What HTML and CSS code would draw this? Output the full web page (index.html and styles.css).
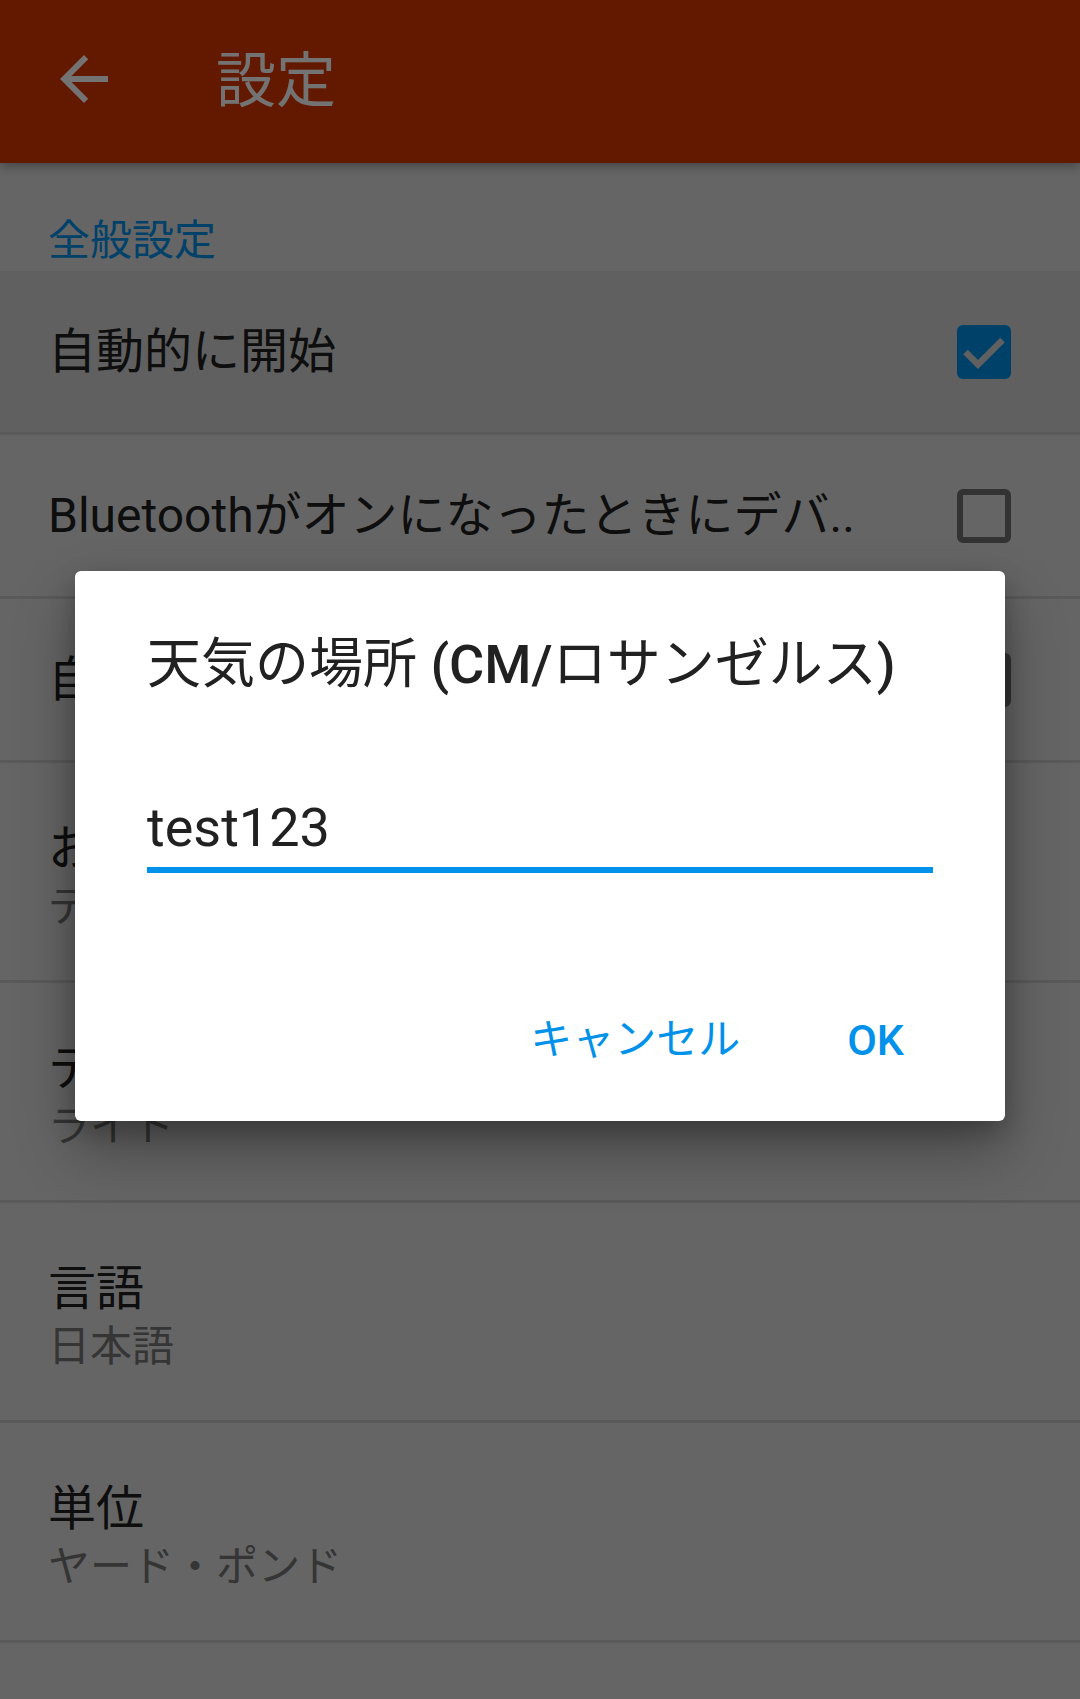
FILE: index.html
```html
<!DOCTYPE html>
<html lang="ja">
<head>
<meta charset="utf-8">
<title>設定</title>
<link rel="stylesheet" href="styles.css">
</head>
<body>
<div class="screen">
  <header class="toolbar">
    <span class="nav">
      <svg viewBox="0 0 24 24" width="72" height="72"><path d="M20 11H7.83l5.59-5.59L12 4l-8 8 8 8 1.41-1.41L7.83 13H20v-2z"/></svg>
    </span>
    <h1 class="toolbar-title">設定</h1>
  </header>

  <main class="prefs">
    <div class="category">全般設定</div>

    <div class="pref pref-pressed">
      <div class="pref-text"><div class="pref-title">自動的に開始</div></div>
      <span class="checkbox checked">
        <svg viewBox="0 0 54 54" width="54" height="54"><polyline points="8.5,27 21,39.5 45.5,15" /></svg>
      </span>
    </div>

    <div class="pref">
      <div class="pref-text"><div class="pref-title">Bluetoothがオンになったときにデバ..</div></div>
      <span class="checkbox"></span>
    </div>

    <div class="pref">
      <div class="pref-text"><div class="pref-title">自動接続</div></div>
      <span class="checkbox"></span>
    </div>

    <div class="pref pref-two">
      <div class="pref-text">
        <div class="pref-title">お気に入り</div>
        <div class="pref-summary">デバイス</div>
      </div>
    </div>

    <div class="pref pref-two">
      <div class="pref-text">
        <div class="pref-title">テーマ</div>
        <div class="pref-summary">ライト</div>
      </div>
    </div>

    <div class="pref pref-two">
      <div class="pref-text">
        <div class="pref-title">言語</div>
        <div class="pref-summary">日本語</div>
      </div>
    </div>

    <div class="pref pref-two">
      <div class="pref-text">
        <div class="pref-title">単位</div>
        <div class="pref-summary">ヤード・ポンド</div>
      </div>
    </div>
  </main>

  <div class="scrim"></div>

  <div class="dialog" role="dialog">
    <h2 class="dialog-title">天気の場所 <span class="latin-strong">(CM/</span>ロサンゼルス<span class="latin-strong">)</span></h2>
    <div class="dialog-input">test123</div>
    <div class="dialog-actions">
      <span class="dialog-btn">キャンセル</span>
      <span class="dialog-btn dialog-btn-ok">OK</span>
    </div>
  </div>
</div>
</body>
</html>
```

FILE: styles.css
```css
* { box-sizing: border-box; }

html, body {
  margin: 0;
  padding: 0;
}

body {
  width: 1080px;
  height: 1699px;
  overflow: hidden;
  background: #e0e0e0;
  font-family: Roboto, "Noto Sans CJK JP", sans-serif;
  color: #212121;
}

.screen {
  position: relative;
  width: 1080px;
  height: 1699px;
  overflow: hidden;
  background: #e0e0e0;
}

/* Toolbar */
.toolbar {
  position: relative;
  z-index: 1;
  height: 163px;
  display: flex;
  align-items: center;
  background: #dc3500;
  box-shadow: 0 3px 10px rgba(0, 0, 0, 0.35);
}

.nav {
  display: flex;
  width: 72px;
  height: 72px;
  margin-left: 48px;
  margin-top: -5px;
}

.nav svg { fill: #ffffff; }

.toolbar-title {
  margin: 0 0 0 96px;
  font-size: 60px;
  font-weight: 400;
  line-height: 72px;
  color: #ffffff;
}

/* Preference list */
.prefs {
  display: flex;
  flex-direction: column;
}

.category {
  height: 108px;
  padding: 57px 48px 0;
  font-size: 42px;
  line-height: 42px;
  color: #0091ea;
}

.pref {
  display: flex;
  align-items: center;
  height: 164px;
  padding: 0 69px 0 48px;
  border-bottom: 3px solid #c8c8c8;
}

.pref-pressed { background: #d4d4d4; }

.pref-two {
  height: 220px;
  padding-top: 10px;
}

.pref-text {
  flex: 1;
  min-width: 0;
}

.pref-title {
  font-size: 48px;
  line-height: 60px;
  color: #212121;
  white-space: nowrap;
}

.pref-summary {
  font-size: 42px;
  line-height: 56px;
  color: #757575;
  white-space: nowrap;
}

.checkbox {
  flex: none;
  width: 54px;
  height: 54px;
  border: 6px solid #717171;
  border-radius: 6px;
}

.checkbox.checked {
  border: none;
  background: #0091ea;
}

.checkbox svg { display: block; }

.checkbox polyline {
  fill: none;
  stroke: #d4d4d4;
  stroke-width: 6.5;
}

/* Scrim + dialog */
.scrim {
  position: absolute;
  inset: 0;
  z-index: 2;
  background: rgba(0, 0, 0, 0.55);
}

.dialog {
  position: absolute;
  z-index: 3;
  left: 75px;
  top: 571px;
  width: 930px;
  padding: 58px 72px 51px;
  background: #ffffff;
  border-radius: 6px;
  box-shadow: 0 30px 60px rgba(0, 0, 0, 0.3), 0 10px 24px rgba(0, 0, 0, 0.22);
}

.dialog-title {
  margin: 0;
  font-size: 54px;
  font-weight: 400;
  line-height: 72px;
  color: #212121;
  white-space: nowrap;
}

.latin-strong { font-weight: 500; }

.dialog-input {
  margin-top: 91px;
  padding-bottom: 3px;
  font-size: 54px;
  line-height: 72px;
  color: #212121;
  border-bottom: 6px solid #0091ea;
}

.dialog-actions {
  display: flex;
  justify-content: flex-end;
  gap: 57px;
  margin: 137px 4px 0 0;
}

.dialog-btn {
  padding: 0 25px;
  font-size: 42px;
  line-height: 60px;
  color: #0091ea;
}

.dialog-btn-ok { font-size: 43px; font-weight: 500; }
```
